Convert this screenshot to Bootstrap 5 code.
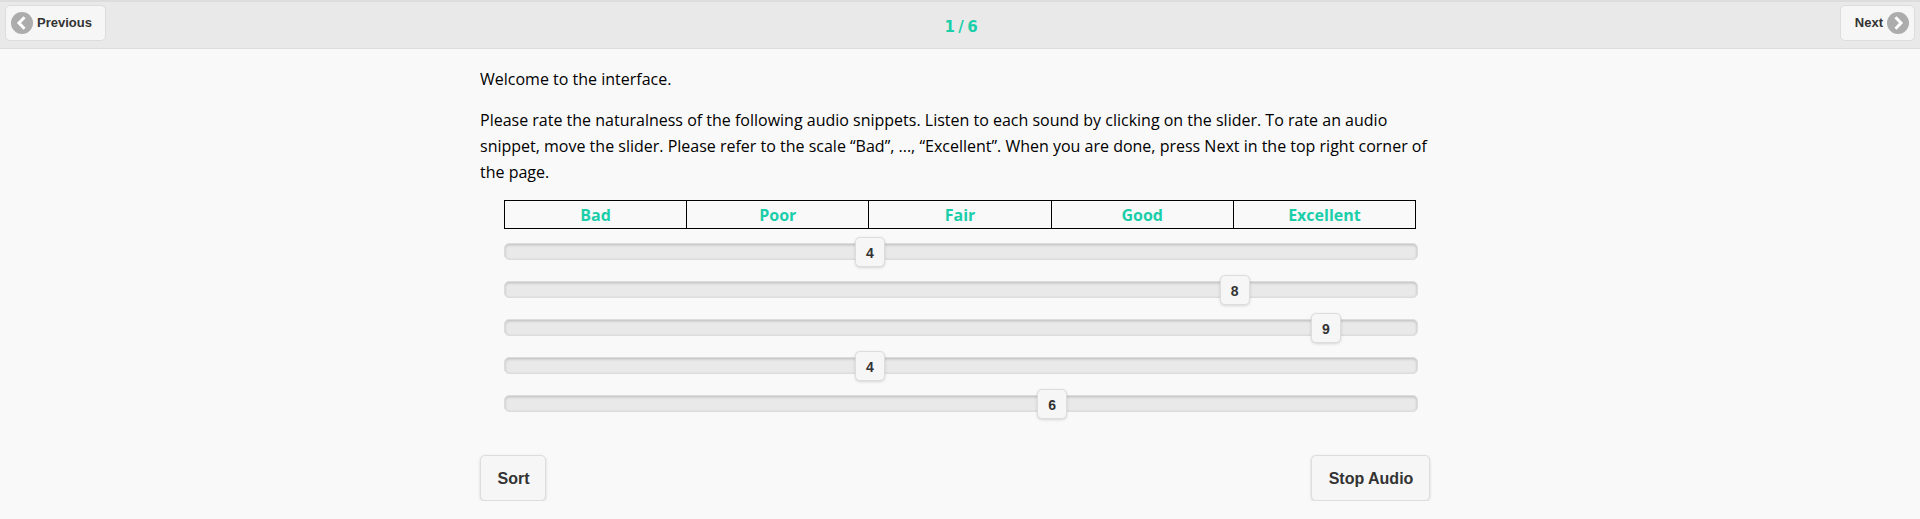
<!DOCTYPE html>
<html lang="en">
<head>
<meta charset="utf-8">
<meta name="viewport" content="width=device-width, initial-scale=1">
<title>Naturalness rating</title>
<link href="https://cdn.jsdelivr.net/npm/bootstrap@5.3.0/dist/css/bootstrap.min.css" rel="stylesheet">
<style>
body{background:#f9f9f9;color:#000;font:16px/26px "Open Sans",sans-serif;overflow-x:hidden}
.topbar{height:49px;background:#e9e9e9;border:solid #ddd;border-width:2px 0 1px;padding:3px 5px 0}
.page-count{color:#1bceaa;font:bold 15px/20px "DejaVu Sans",sans-serif;word-spacing:-1.8px;padding:15px 0 0 2px}
.btn.tool{--bs-btn-color:#333;--bs-btn-bg:#f6f6f6;--bs-btn-border-color:#ddd;--bs-btn-hover-bg:#ededed;--bs-btn-hover-color:#333;--bs-btn-hover-border-color:#ddd;font-family:"Liberation Sans",sans-serif;font-weight:700;border-radius:5px}
.tool.nav-btn{height:36px;font-size:13px;line-height:16px}
.tool.prev{width:101px;padding:0 0 0 5px;gap:4px}
.tool.next{width:75px;padding:0 5px 0 0;gap:4px;justify-content:flex-end}
.tool.action{height:46px;font-size:16px;line-height:20px;padding:2px 0 0 1px;box-shadow:0 1px 3px rgba(0,0,0,.15)}
.sort{width:66px}.stop{width:119px}
.study{width:950px;margin-left:480px;padding-top:17px}
.study p{margin:0 0 15px}
.rating{margin:15px 12px 43px 24px}
.scale{width:912px;height:29px;border:1px solid #000}
.scale div{color:#1bceaa;font-weight:700;text-align:center;line-height:28px}
.scale div+div{border-left:1px solid #000}
.sliders{gap:21px;padding-top:14px}
.track{width:914px;height:17px;background:#e9e9e9;border:1px solid #ddd;border-radius:5px;box-shadow:inset 0 1px 3px rgba(0,0,0,.2)}
.handle{top:-7px;width:30px;height:30px;margin-left:-15px;background:#f6f6f6;border:1px solid #ddd;border-radius:5px;box-shadow:0 1px 3px rgba(0,0,0,.15);color:#333;font:bold 14px/31px "Liberation Sans",sans-serif;text-align:center}
</style>
</head>
<body>
<header class="topbar d-flex justify-content-between align-items-start position-relative">
  <button class="btn tool nav-btn prev d-flex align-items-center" type="button">
    <svg width="22" height="22" viewBox="0 0 22 22"><circle cx="11" cy="11" r="11" fill="#acacac"/><path d="M13.5 5.3 8 11l5.5 5.7" fill="none" stroke="#fff" stroke-width="3"/></svg>Previous
  </button>
  <div class="page-count position-absolute top-0 start-0 w-100 text-center pe-none" id="count">1 / 6</div>
  <button class="btn tool nav-btn next d-flex align-items-center" type="button">
    Next<svg width="22" height="22" viewBox="0 0 22 22"><circle cx="11" cy="11" r="11" fill="#acacac"/><path d="M8.5 5.3 14 11l-5.5 5.7" fill="none" stroke="#fff" stroke-width="3"/></svg>
  </button>
</header>
<main class="study">
  <p>Welcome to the interface.</p>
  <p class="mb-0">Please rate the naturalness of the following audio snippets. Listen to each sound by clicking on the slider. To rate an audio snippet, move the slider. Please refer to the scale “Bad”, ..., “Excellent”. When you are done, press Next in the top right corner of the page.</p>
  <section class="rating">
    <div class="scale row g-0">
      <div class="col">Bad</div><div class="col">Poor</div><div class="col">Fair</div><div class="col">Good</div><div class="col">Excellent</div>
    </div>
    <div class="sliders d-flex flex-column">
      <div class="track position-relative"><div class="handle position-absolute" style="left:40%">4</div></div>
      <div class="track position-relative"><div class="handle position-absolute" style="left:80%">8</div></div>
      <div class="track position-relative"><div class="handle position-absolute" style="left:90%">9</div></div>
      <div class="track position-relative"><div class="handle position-absolute" style="left:40%">4</div></div>
      <div class="track position-relative"><div class="handle position-absolute" style="left:60%">6</div></div>
    </div>
  </section>
  <div class="d-flex justify-content-between">
    <button class="btn tool action sort" type="button">Sort</button>
    <button class="btn tool action stop" type="button">Stop Audio</button>
  </div>
</main>
<script src="https://cdn.jsdelivr.net/npm/bootstrap@5.3.0/dist/js/bootstrap.bundle.min.js"></script>
</body>
</html>
